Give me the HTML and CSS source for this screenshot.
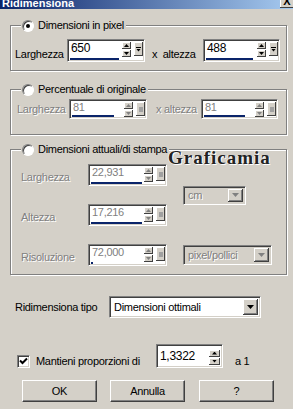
FILE: index.html
```html
<!DOCTYPE html>
<html>
<head>
<meta charset="utf-8">
<link rel="stylesheet" href="styles.css">
</head>
<body>
<div class="titlebar"><span class="title">Ridimensiona</span><span class="close"><span class="cx">X</span></span></div>
<div class="content">
  <fieldset class="group g1">
    <legend><span class="lg"><span class="radio on"></span><span class="lgt">Dimensioni in pixel</span></span></legend>
    <div class="row r1">
      <span class="lbl l1">Larghezza</span>
      <div class="spin big">
        <div class="field"><span class="val vbig">650</span><span class="bar" style="width:49px"></span></div>
        <div class="ud"><span class="b up"></span><span class="b dn"></span></div>
        <span class="sb"></span>
      </div>
      <span class="lbl xa">x&nbsp; altezza</span>
      <div class="spin big w77">
        <div class="field"><span class="val vbig">488</span><span class="bar" style="width:47px"></span></div>
        <div class="ud"><span class="b up"></span><span class="b dn"></span></div>
        <span class="sb"></span>
      </div>
    </div>
  </fieldset>

  <fieldset class="group g2">
    <legend><span class="lg"><span class="radio"></span><span class="lgt">Percentuale di originale</span></span></legend>
    <div class="row r2 dis">
      <span class="lbl l2">Larghezza</span>
      <div class="spin mid">
        <div class="field"><span class="val">81</span><span class="bar" style="width:42px"></span></div>
        <div class="ud"><span class="b up"></span><span class="b dn"></span></div>
        <span class="sb"></span>
      </div>
      <span class="lbl xa2">x altezza</span>
      <div class="spin mid w77">
        <div class="field"><span class="val">81</span><span class="bar" style="width:41px"></span></div>
        <div class="ud"><span class="b up"></span><span class="b dn"></span></div>
        <span class="sb"></span>
      </div>
    </div>
  </fieldset>

  <fieldset class="group g3">
    <legend><span class="lg"><span class="radio"></span><span class="lgt">Dimensioni attuali/di stampa</span></span></legend>
    <div class="grid3 dis">
      <span class="lbl">Larghezza</span>
      <div class="spin g3s">
        <div class="field"><span class="val">22,931</span><span class="bar" style="width:51px"></span></div>
        <div class="ud"><span class="b up"></span><span class="b dn"></span></div>
        <span class="sb"></span>
      </div>
      <div class="combo c-cm"><span class="ct">cm</span><span class="arr"></span></div>
      <span class="lbl">Altezza</span>
      <div class="spin g3s">
        <div class="field"><span class="val">17,216</span><span class="bar" style="width:51px"></span></div>
        <div class="ud"><span class="b up"></span><span class="b dn"></span></div>
        <span class="sb"></span>
      </div>
      <span class="lbl">Risoluzione</span>
      <div class="spin g3s">
        <div class="field"><span class="val">72,000</span><span class="bar" style="width:2px"></span></div>
        <div class="ud"><span class="b up"></span><span class="b dn"></span></div>
        <span class="sb"></span>
      </div>
      <div class="combo c-pp"><span class="ct">pixel/pollici</span><span class="arr"></span></div>
    </div>
  </fieldset>

  <div class="row tipo">
    <span class="lbl lt">Ridimensiona tipo</span>
    <div class="combo c-tipo"><span class="ct">Dimensioni ottimali</span><span class="arr"></span></div>
  </div>

  <div class="row keep">
    <span class="check"><svg width="11" height="11" viewBox="0 0 11 11"><path d="M2 4.5 L4.5 7 L9 2.5" fill="none" stroke="#000" stroke-width="2"/></svg></span>
    <span class="lbl lk">Mantieni proporzioni di</span>
    <div class="num">
      <span class="nv">1,3322</span>
      <div class="ud ud2"><span class="b up"></span><span class="b dn"></span></div>
    </div>
    <span class="lbl a1">a 1</span>
  </div>

  <div class="row btns">
    <span class="btn">OK</span>
    <span class="btn b2">Annulla</span>
    <span class="btn b3">?</span>
  </div>
</div>
<div class="wm">Graficamia</div>
</body>
</html>
```

FILE: styles.css
```css
* { box-sizing: border-box; }
html, body { margin: 0; padding: 0; }
body {
  width: 293px;
  height: 409px;
  overflow: hidden;
  position: relative;
  background: #d4d0c8;
  font-family: "Liberation Sans", Arial, sans-serif;
  font-size: 11px;
  line-height: 13px;
  letter-spacing: -0.3px;
  color: #000;
}

/* title bar */
.titlebar {
  display: flex;
  justify-content: space-between;
  height: 9px;
  overflow: hidden;
  background: linear-gradient(90deg, #0a246a 0%, #a6caf0 100%);
}
.title {
  color: #fff;
  font-weight: bold;
  line-height: 11px;
  margin-top: -2px;
  padding-left: 2px;
  letter-spacing: 0;
}
.close {
  width: 14px;
  height: 8px;
  margin-right: -1px;
  background: #d4d0c8;
  box-shadow: inset -1px -1px 0 #404040, inset 1px 0 0 #fff;
  display: flex;
  justify-content: center;
  overflow: hidden;
}
.cx {
  font-weight: bold;
  line-height: 11px;
  margin-top: -4px;
  letter-spacing: 0;
}

.content { padding: 0 6px 0 10px; }

/* group boxes */
.group {
  margin: 10px 0 0;
  padding: 0;
  min-width: 0;
  border: 1px solid #808080;
  box-shadow: inset 1px 1px 0 #fff, 1px 1px 0 #fff;
}
.g2 { margin-top: 12px; }
.g3 { margin-top: 8px; }
legend {
  margin-left: 10px;
  padding: 0 2px 0 1px;
  background: #d4d0c8;
  line-height: 13px;
  height: 13px;
}
.lg { display: inline-flex; vertical-align: top; align-items: center; height: 13px; }
.radio {
  width: 12px;
  height: 12px;
  margin-right: 4px;
  border-radius: 50%;
  background: #fff;
  border: 1px solid;
  border-color: #808080 #fff #fff #808080;
  box-shadow: inset 1px 1px 0 #404040;
  display: flex;
  align-items: center;
  justify-content: center;
}
.radio.on::after {
  content: "";
  width: 4px;
  height: 4px;
  border-radius: 50%;
  background: #000;
}

.row { display: flex; align-items: flex-end; }
.lbl { flex: none; white-space: nowrap; }

.r1 { padding: 7px 0 8px 4px; }
.r1 .lbl { margin-bottom: 1px; }
.l1 { width: 52px; }
.xa { width: 51px; margin-left: 7px; }

.r2 { padding: 3px 0 15px 6px; align-items: center; }
.l2 { width: 52px; }
.xa2 { width: 45px; margin-left: 9px; }

.dis .lbl, .dis .val, .dis .ct {
  color: #808080;
  text-shadow: 1px 1px 0 #fff;
}

/* spin edit */
.spin {
  flex: none;
  display: flex;
  align-items: flex-start;
  background: #fff;
  border: 1px solid;
  border-color: #808080 #fff #fff #808080;
  box-shadow: inset 1px 1px 0 #404040, inset -1px -1px 0 #d4d0c8;
  padding: 1px;
}
.big { width: 78px; height: 23px; }
.mid { width: 78px; height: 20px; }
.g3s { width: 79px; height: 22px; }
.w77 { width: 77px; }
.field {
  flex: 1;
  min-width: 0;
  align-self: stretch;
  display: flex;
  flex-direction: column;
  justify-content: space-between;
  padding-left: 2px;
}
.val { line-height: 12px; }
.vbig { font-size: 12px; line-height: 14px; }
.bar { display: block; height: 2px; margin-left: -1px; background: #0a246a; }
.ud {
  flex: none;
  width: 9px;
  margin: 1px 0 0 2px;
  display: flex;
  flex-direction: column;
  gap: 1px;
}
.b {
  height: 7px;
  background: #d4d0c8;
  box-shadow: inset -1px -1px 0 #404040, inset 1px 1px 0 #fff;
  display: flex;
  align-items: center;
  justify-content: center;
}
.b::after {
  content: "";
  width: 5px;
  height: 3px;
  background: #000;
}
.up::after { clip-path: polygon(50% 0, 100% 100%, 0 100%); }
.dn::after { clip-path: polygon(0 0, 100% 0, 50% 100%); }
.sb {
  flex: none;
  width: 9px;
  height: 14px;
  margin: 1px 0 0 3px;
  background: #d4d0c8;
  box-shadow: inset -1px -1px 0 #404040, inset 1px 1px 0 #fff;
  display: flex;
  flex-direction: column;
  align-items: center;
  justify-content: center;
  gap: 1px;
}
.sb::before { content: ""; width: 5px; height: 1px; background: #000; }
.sb::after {
  content: "";
  width: 5px;
  height: 3px;
  background: #000;
  clip-path: polygon(0 0, 100% 0, 50% 100%);
}
.dis .b::after { background: #808080; }
.dis .sb::before { display: none; }
.dis .sb::after { width: 4px; height: 5px; background: #a0a0a0; clip-path: none; }

/* group 3 grid */
.grid3 {
  display: grid;
  grid-template-columns: 67px 79px auto;
  grid-template-rows: 22px 22px 22px;
  row-gap: 18px;
  padding: 8px 0 8px 10px;
  justify-items: start;
}
.grid3 .lbl { align-self: end; margin-bottom: 2px; }
.grid3 .combo { margin-left: 16px; grid-column: 3; }
.c-cm { grid-row: 1 / 3; align-self: center; width: 63px; height: 19px; }
.c-pp { grid-row: 3; align-self: center; width: 89px; height: 20px; }

/* combo */
.combo {
  display: flex;
  align-items: center;
  background: #fff;
  border: 1px solid;
  border-color: #808080 #fff #fff #808080;
  box-shadow: inset 1px 1px 0 #404040, inset -1px -1px 0 #d4d0c8;
  padding: 2px;
}
.dis .combo { background: #d4d0c8; }
.ct { flex: 1; padding-left: 2px; white-space: nowrap; overflow: hidden; }
.arr {
  flex: none;
  width: 15px;
  align-self: stretch;
  background: #d4d0c8;
  box-shadow: inset -1px -1px 0 #404040, inset 1px 1px 0 #fff, inset -2px -2px 0 #808080;
  display: flex;
  align-items: center;
  justify-content: center;
}
.arr::after {
  content: "";
  width: 7px;
  height: 4px;
  background: #000;
  clip-path: polygon(0 0, 100% 0, 50% 100%);
}
.dis .arr::after { background: #808080; }

/* tipo row */
.tipo { margin-top: 21px; padding-left: 5px; align-items: center; }
.lt { width: 94px; }
.c-tipo { width: 152px; height: 22px; }

/* keep proportions row */
.keep { margin-top: 26px; padding-left: 7px; }
.check {
  flex: none;
  width: 13px;
  height: 13px;
  background: #fff;
  border: 1px solid;
  border-color: #808080 #fff #fff #808080;
  box-shadow: inset 1px 1px 0 #404040, inset -1px -1px 0 #d4d0c8;
  display: flex;
  align-items: center;
  justify-content: center;
}
.check svg { display: block; }
.lk { width: 120px; margin-left: 6px; }
.num {
  flex: none;
  width: 67px;
  height: 24px;
  display: flex;
  align-items: center;
  background: #fff;
  border: 1px solid;
  border-color: #808080 #fff #fff #808080;
  box-shadow: inset 1px 1px 0 #404040, inset -1px -1px 0 #d4d0c8;
  padding: 1px 2px 1px 3px;
}
.nv { flex: 1; font-size: 12px; }
.ud2 { width: 11px; margin: 2px 0 0 0; }
.a1 { margin-left: 12px; }

/* buttons */
.btns { margin-top: 12px; padding-left: 12px; }
.btn {
  flex: none;
  width: 75px;
  height: 22px;
  background: #d4d0c8;
  border: 1px solid;
  border-color: #fff #404040 #404040 #fff;
  box-shadow: inset -1px -1px 0 #808080;
  display: flex;
  align-items: center;
  justify-content: center;
}
.b2 { margin-left: 13px; }
.b3 { margin-left: 14px; }

/* watermark */
.wm {
  position: absolute;
  left: 168px;
  top: 148px;
  font-family: "Liberation Serif", "Times New Roman", serif;
  font-weight: bold;
  font-size: 19px;
  line-height: 19px;
  letter-spacing: 1px;
  color: #222;
  text-shadow: 1px 1px 0 #fff, -1px 0 0 #eee;
}
```
